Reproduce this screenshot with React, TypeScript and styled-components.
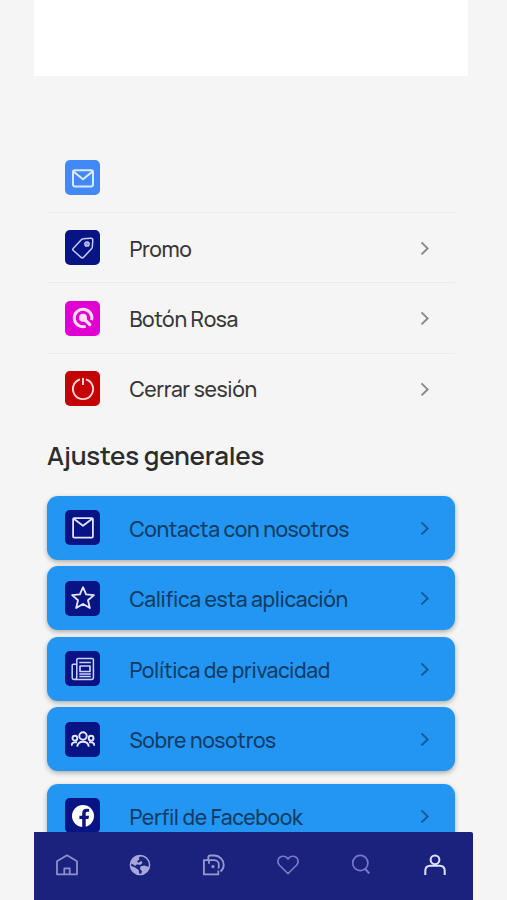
import React from "react";
import styled, { createGlobalStyle } from "styled-components";

const GlobalStyle = createGlobalStyle`
  *, *::before, *::after { box-sizing: border-box; }
  body {
    margin: 0;
    background: #f5f5f5;
    font-family: Manrope, Inter, "Open Sans", sans-serif;
  }
`;

const Screen = styled.div`
  width: 439px;
  height: 900px;
  margin-left: 34px;
  display: flex;
  flex-direction: column;
  overflow: hidden;
`;

const Header = styled.header`
  flex: none;
  width: 434px;
  height: 76px;
  background: #fff;
`;

const Content = styled.main`
  flex: 1;
  min-height: 0;
  overflow: hidden;
  padding: 66.4px 18px 0 13px;
`;

const Row = styled.div<{ $line?: boolean }>`
  height: 70.4px;
  padding: 0 24px 0 18px;
  display: flex;
  align-items: center;
  box-shadow: ${(p) => (p.$line ? "inset 0 -1px 0 #ebebed" : "none")};
`;

const Tile = styled.span<{ $bg: string }>`
  flex: none;
  width: 35px;
  height: 35px;
  border-radius: 5px;
  background: ${(p) => p.$bg};
  display: flex;
  align-items: center;
  justify-content: center;
`;

const Label = styled.span<{ $color?: string }>`
  flex: 1;
  margin-left: 29.4px;
  padding-top: 1.4px;
  font-size: 21px;
  font-weight: 500;
  line-height: 28px;
  white-space: nowrap;
  letter-spacing: -0.35px;
  color: ${(p) => p.$color ?? "#37373a"};
`;

const Title = styled.h2`
  margin: 12.8px 0 23.2px;
  height: 36px;
  line-height: 36px;
  font-size: 25.8px;
  font-weight: 600;
  white-space: nowrap;
  letter-spacing: -0.2px;
  color: #2c2c2e;
`;

const Card = styled.div<{ $gap?: number }>`
  height: 64px;
  margin-bottom: ${(p) => p.$gap ?? 6.5}px;
  padding: 0 24px 0 18px;
  display: flex;
  align-items: center;
  border-radius: 11px;
  background: #2396f3;
  box-shadow: 0 2px 5px rgba(0, 0, 0, 0.3);
`;

const Nav = styled.nav`
  flex: none;
  position: relative;
  height: 68px;
  padding: 0 26px 2px 20.5px;
  display: flex;
  align-items: center;
  justify-content: space-between;
  background: #1b227e;
  border-radius: 0 2px 0 0;
`;

const Svg = styled.svg`
  flex: none;
  display: block;
  fill: none;
  stroke-linejoin: round;
`;

type IconProps = { color?: string; width?: number; children: React.ReactNode };

const Icon = ({ color = "#e4e9ff", width = 1.6, children }: IconProps) => (
  <Svg width="24" height="24" viewBox="0 0 24 24" stroke={color} strokeWidth={width}>
    {children}
  </Svg>
);

const Chevron = ({ color }: { color: string }) => (
  <Svg width="12" height="16" viewBox="0 0 12 16" stroke={color} strokeWidth="2">
    <path d="M2.5 2.4 8.6 8.4l-6.1 6" strokeLinejoin="miter" />
  </Svg>
);

const Mail = () => (
  <Icon color="#d9eaff" width={2}>
    <rect x="2" y="4.2" width="20" height="16.2" rx="1.8" />
    <path d="m2.6 5.6 9.4 7.6 9.4-7.6" />
  </Icon>
);

const Tag = () => (
  <Icon color="#c4ccf5" width={1.5}>
    <path d="m2.2 12.4 8.3-8.8Q11.3 2.8 12.4 2.8l7.3-.5q2.2-.1 2.1 2l-.5 6.7q-.1 1-.8 1.8l-8.1 8.6q-1.1 1.1-2.3 0l-7.8-6.9q-1.1-1-.1-2.1Z" />
    <circle cx="16" cy="8" r="2.1" />
    <path d="m15.2 8.7 1.5-1.5" />
  </Icon>
);

const PinkButton = () => (
  <Icon color="#ffe0ff" width={3}>
    <path d="M20.6 14.2A8.8 8.8 0 1 0 14.6 20.4" />
    <circle cx="12" cy="11.8" r="4" fill="#ffe0ff" stroke="none" />
    <path d="m13.2 13 5.6 5.6" strokeWidth="3.2" strokeLinecap="round" />
  </Icon>
);

const Power = () => (
  <Icon color="#ffdada" width={1.9}>
    <path d="M9 2.4a10.1 10.1 0 1 0 6 0M12 1v7" />
  </Icon>
);

const Envelope = () => (
  <Icon color="#dfe4ff" width={1.8}>
    <rect x="2.1" y="2.2" width="19.8" height="19.4" rx="1" />
    <path d="m2.8 2.8 9.2 7 9.2-7" />
  </Icon>
);

const Star = () => (
  <Icon width={1.8}>
    <path d="m12 1.2 3.1 7.1 7.8.8-5.9 5.1 1.8 7.8-6.8-4.1-6.8 4.1L7 14.2 1.1 9.1l7.8-.8Z" />
  </Icon>
);

const News = () => (
  <Icon color="#cbd1f6" width={1.5}>
    <path d="M5.8 2.8q0-1.3 1.3-1.3h14q1.3 0 1.3 1.3v17.6q0 2-2 2H3.2q-2 0-2-2V8.3q0-1 1-1h3.6M5.8 2.8v16.9q0 2.7-2.3 2.7" />
    <rect x="9" y="9" width="10" height="5.5" strokeWidth="1.7" />
    <path d="M8.3 5.6h11.5M8.3 17h11.5M8.3 19.6h11.5" strokeWidth="1.5" />
  </Icon>
);

const People = () => (
  <Icon width={1.9}>
    <circle cx="12" cy="9" r="3.7" />
    <path d="M6.2 19.7q.6-4.9 5.8-4.9t5.8 4.9" />
    <circle cx="3.9" cy="11.2" r="2.4" />
    <circle cx="20.1" cy="11.2" r="2.4" />
    <path d="M.6 18.7q.2-3.6 3.8-3.6l1.6.3M23.4 18.7q-.2-3.6-3.8-3.6l-1.6.3" />
  </Icon>
);

const Facebook = () => (
  <Icon color="none">
    <circle cx="12" cy="12" r="11" fill="#fff" />
    <path d="M11.2 23v-8H8.4v-3.3h2.8V9.2c0-3 1.8-4.4 4.5-4.4l2.4.2v2.8h-1.5c-1.5 0-1.9.8-1.9 1.8v2.1H18l-.5 3.3h-2.8v8Z" fill="#10147e" />
  </Icon>
);

const Home = () => (
  <Icon color="#8d8fcd" width={1.8}>
    <path d="M2 8.2 12 2.3l10 5.9v13.1H2ZM9.3 21v-5.6h5.4V21" />
  </Icon>
);

const Globe = () => (
  <Icon color="#a6a8db" width={1.5}>
    <circle cx="12" cy="12" r="9.6" />
    <path
      d="M3.2 8.2 7.4 3.7l6-1.3-2.5 2.3.4 1.9-2.4 1.9 1.8 1.3 2.7-2 1 2.1-1.8 1.8-3.9-.2-1.7 1.5-1.7-1.6-2.6-1.1ZM2.5 12.8l4.2 1.5 4 2.6.7 4.6C6.5 21.2 2.6 17.8 2.5 12.8ZM12.6 13.2l4-.6 4.6 1.6c-1.2 4.1-4.2 6.8-8.2 7.4l1-3.4-2-2.3Z"
      fill="#a6a8db"
      stroke="none"
    />
  </Icon>
);

const Wallet = () => (
  <Icon color="#9899d0" width={1.8}>
    <path d="M6.8 7.2H1.9v14.2h14.4v-3.8" />
    <path d="M6.3 7.4V4.5q0-2 2-2h4.2a9.4 9.4 0 0 1 9.2 9.4c0 2.9-1.3 5.1-3.2 6.6" />
    <path d="M7 10.8V7.2h5.2c3 0 4.7 2.2 4.7 4.8 0 1.6-.2 2.9-.6 3.7" />
    <circle cx="11" cy="13.6" r=".7" fill="#9899d0" />
  </Icon>
);

const Heart = () => (
  <Icon color="#7778c6" width={1.6}>
    <path d="M12 20.6 3.5 12.2C.5 9 1.8 4 6.4 3.3c2.5-.3 4.5.9 5.6 2.8 1.1-1.9 3.1-3.1 5.6-2.8C22.2 4 23.5 9 20.5 12.2Z" />
  </Icon>
);

const Search = () => (
  <Icon color="#7778c6" width={1.7}>
    <circle cx="11.3" cy="10" r="7.6" />
    <path d="m16 15.6 4.3 4.9" strokeWidth="2.1" />
  </Icon>
);

const User = () => (
  <Icon color="#dfe3ff" width={2}>
    <circle cx="12" cy="6.8" r="4.4" />
    <path d="M2.3 22v-4.3q0-5 5-5h9.4q5 0 5 5V22" />
  </Icon>
);

const NAVY = "#091484";

const account = [
  { label: "Promo", bg: NAVY, icon: <Tag />, line: true },
  { label: "Botón Rosa", bg: "#e100d2", icon: <PinkButton />, line: true },
  { label: "Cerrar sesión", bg: "#c40004", icon: <Power />, line: false },
];

const settings = [
  { label: "Contacta con nosotros", icon: <Envelope /> },
  { label: "Califica esta aplicación", icon: <Star /> },
  { label: "Política de privacidad", icon: <News /> },
  { label: "Sobre nosotros", icon: <People />, gap: 12.5 },
  { label: "Perfil de Facebook", icon: <Facebook /> },
];

export default function App() {
  return (
    <>
      <GlobalStyle />
      <Screen>
        <Header />
        <Content>
          <Row $line>
            <Tile $bg="#4289f5"><Mail /></Tile>
          </Row>
          {account.map((r) => (
            <Row key={r.label} $line={r.line}>
              <Tile $bg={r.bg}>{r.icon}</Tile>
              <Label>{r.label}</Label>
              <Chevron color="#8a8a8c" />
            </Row>
          ))}
          <Title>Ajustes generales</Title>
          {settings.map((s) => (
            <Card key={s.label} $gap={s.gap}>
              <Tile $bg={NAVY}>{s.icon}</Tile>
              <Label $color="#123c66">{s.label}</Label>
              <Chevron color="#135a99" />
            </Card>
          ))}
        </Content>
        <Nav>
          <Home />
          <Globe />
          <Wallet />
          <Heart />
          <Search />
          <User />
        </Nav>
      </Screen>
    </>
  );
}
